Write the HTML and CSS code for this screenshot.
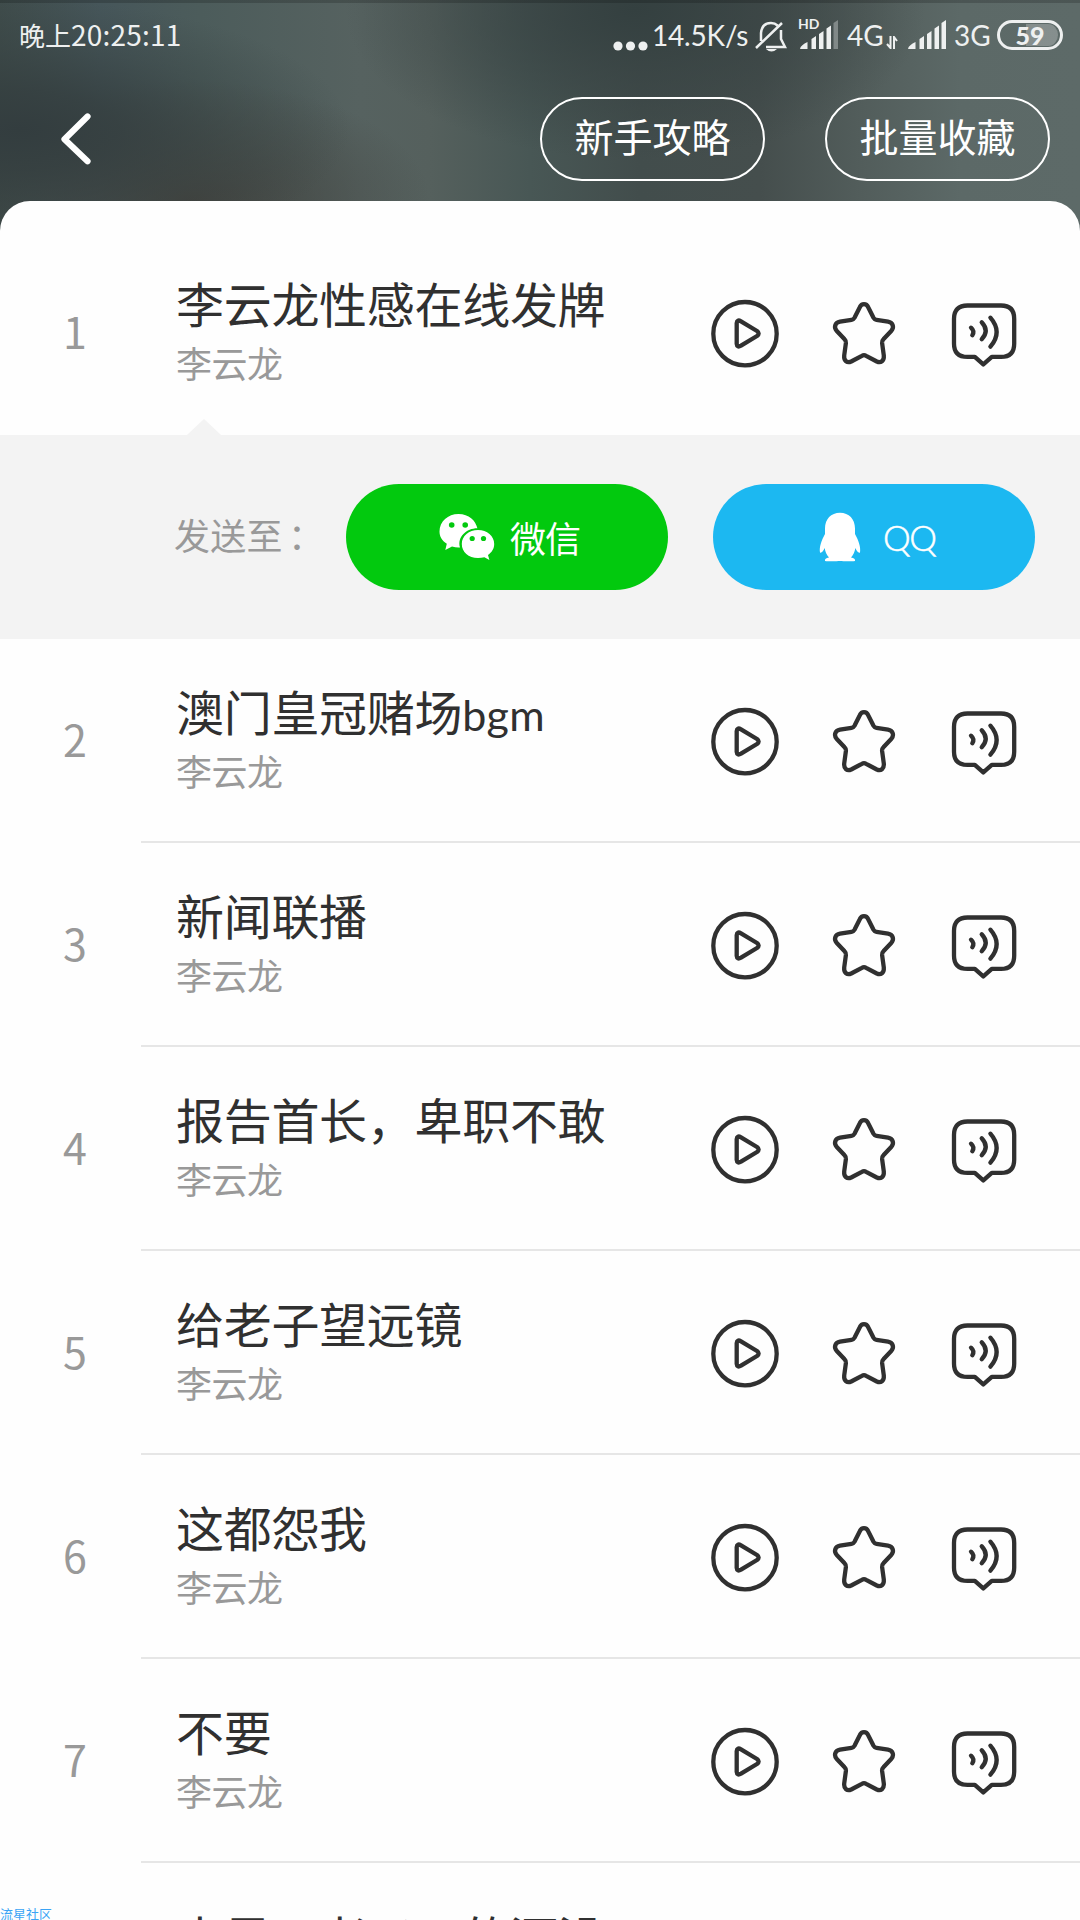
FILE: index.html
```html
<!DOCTYPE html>
<html lang="zh-CN">
<head>
<meta charset="utf-8">
<title>李云龙</title>
<link rel="stylesheet" href="styles.css">
</head>
<body>
<svg class="defs" aria-hidden="true">
  <symbol id="play" viewBox="0 0 72 72">
    <circle cx="36" cy="36.7" r="31.7"/>
    <path d="M27.700 26.200q.3-4.200 4.300-1.900l16 9.700q3.300 2.500 0 5l-16 9.700q-4 2.300-4.300-1.900z"/>
  </symbol>
  <symbol id="star" viewBox="0 0 72 72">
    <path d="M30.800 10.200C32.500 6.200 37.500 6.200 39.200 10.200L44.500 20.700Q45.500 22.500 47.500 22.800L59 24.600C64.300 25.500 65.300 30.500 62.200 34L54.400 42.300Q52.900 43.800 53.100 46L54.800 58.500C55.300 64 51.800 66.300 47.800 64.500L37.100 58.800Q35 57.600 32.900 58.800L22.200 64.500C18.200 66.300 14.700 64 15.200 58.500L16.900 46Q17.100 43.800 15.600 42.300L7.800 34C4.700 30.500 5.700 25.500 11 24.600L22.500 22.800Q24.500 22.500 25.500 20.700Z"/>
  </symbol>
  <symbol id="voice" viewBox="0 0 72 72">
    <path d="M19.500 8.500h33.500q13.200 0 13.200 13.200v25q0 13.200-13.200 13.200h-9.200l-8.500 7.500-8.500-7.500h-7.300q-13.500 0-13.500-13.200v-25q0-13.200 13.500-13.200z"/>
    <path d="M23 30.700q4 3.500 1.300 7.600M33.700 25.300q8 8.500 0 17M42.400 20.700q12.500 14.500 0 29"/>
  </symbol>
  <symbol id="bars" viewBox="0 0 40 30">
    <path d="M0 28.500q1-3.500 7.500-6.500v7h-7zM11.500 19l4.500-3v13h-4.500zM19 14l4.500-3v18H19zM26.500 8.500l4.500-3V29h-4.500z"/>
  </symbol>
</svg>
<header class="top">
  <div class="status">
    <span class="clock">晚上<b>20:25:11</b></span>
    <svg class="dots" viewBox="0 0 36 12"><circle cx="5" cy="6" r="4.600"/><circle cx="17.500" cy="6" r="4.600"/><circle cx="30" cy="6" r="4.600"/></svg>
    <span class="speed">14.5K/s</span>
    <svg class="bell" viewBox="0 0 32 32"><path d="M6 21V13Q7 3 16 3q4 0 6.500 2.500M26 10v9l4 8H11M1 28L27 3" /><path class="solid" d="M11 29h11q-5.500 5-11 0z"/></svg>
    <span class="hd">
      <svg class="signal" viewBox="0 0 40 32"><use href="#bars" x="1" y="1" width="40" height="30"/><path class="dim" d="M34.500 4l4.500-3v29h-4.500z"/></svg>
      <b>HD</b>
    </span>
    <span class="net four">4G</span>
    <svg class="updown" viewBox="0 0 12 13"><path d="M4.500 0v12L1 8M8 13V1l3 4"/></svg>
    <svg class="signal" viewBox="0 0 40 32"><use href="#bars" x="1" y="1" width="40" height="30"/><path d="M34.500 4l4.500-3v29h-4.500z"/></svg>
    <span class="net">3G</span>
    <span class="battery">59</span>
  </div>
  <nav class="bar">
    <svg class="back" viewBox="0 0 30 52"><path d="M26.500 3.500L3.500 26.300l23 22"/></svg>
    <a class="pill">新手攻略</a>
    <a class="pill">批量收藏</a>
  </nav>
</header>
<main class="sheet">
  <section class="row open"><span class="num">1</span><div class="text"><h2>李云龙性感在线发牌</h2><p>李云龙</p></div><div class="icons"><svg><use href="#play"/></svg><svg><use href="#star"/></svg><svg><use href="#voice"/></svg></div></section>
  <section class="share">
    <span class="label">发送至<span class="colon">：</span></span>
    <a class="send wechat">
      <svg viewBox="0 0 56 48"><path d="M19.500 1C30 1 36.500 7.500 38.400 15.300 27.500 15.300 18 24 21 34.500q-4 .3-8-1L6.300 37l1.500-6.200C2.800 27.500.5 23.500.5 18.500.5 8.500 9 1 19.500 1z"/><path d="M39 17c9 0 16.200 6 16.200 14 0 5-2.500 8.300-6.200 11l1.400 5-5-2.800q-3 .8-6.400.8c-9.500 0-16.200-6-16.200-14S30 17 39 17z"/><g fill="#02c90e"><circle cx="12.700" cy="12" r="2.800"/><circle cx="26.200" cy="12" r="2.800"/><circle cx="33.200" cy="25.500" r="2.600"/><circle cx="44.500" cy="25.500" r="2.600"/></g></svg>
      <span>微信</span>
    </a>
    <a class="send qq">
      <svg viewBox="0 0 42 50"><path d="M21 .700C30 .700 36 7 36 16.500V22c3.500 6.500 6 13 5 18.500-1.500.8-3-1-4.700-4.500-.5 4-2 7-4.300 9.500 3 .5 4.500 1.500 4 3.500-4 .5-12 .3-15 0-3 .3-11 .5-15 0-.5-2 1-3 4-3.500-2.300-2.500-3.800-5.500-4.300-9.500-1.700 3.500-3.200 5.300-4.700 4.500-1-5.500 1.500-12 5-18.500v-5.500C6 7 12 .700 21 .700z"/></svg>
      <span>QQ</span>
    </a>
  </section>
  <section class="row"><span class="num">2</span><div class="text"><h2>澳门皇冠赌场<i>bgm</i></h2><p>李云龙</p></div><div class="icons"><svg><use href="#play"/></svg><svg><use href="#star"/></svg><svg><use href="#voice"/></svg></div></section>
  <section class="row"><span class="num">3</span><div class="text"><h2>新闻联播</h2><p>李云龙</p></div><div class="icons"><svg><use href="#play"/></svg><svg><use href="#star"/></svg><svg><use href="#voice"/></svg></div></section>
  <section class="row"><span class="num">4</span><div class="text"><h2>报告首长，卑职不敢</h2><p>李云龙</p></div><div class="icons"><svg><use href="#play"/></svg><svg><use href="#star"/></svg><svg><use href="#voice"/></svg></div></section>
  <section class="row"><span class="num">5</span><div class="text"><h2>给老子望远镜</h2><p>李云龙</p></div><div class="icons"><svg><use href="#play"/></svg><svg><use href="#star"/></svg><svg><use href="#voice"/></svg></div></section>
  <section class="row"><span class="num">6</span><div class="text"><h2>这都怨我</h2><p>李云龙</p></div><div class="icons"><svg><use href="#play"/></svg><svg><use href="#star"/></svg><svg><use href="#voice"/></svg></div></section>
  <section class="row"><span class="num">7</span><div class="text"><h2>不要</h2><p>李云龙</p></div><div class="icons"><svg><use href="#play"/></svg><svg><use href="#star"/></svg><svg><use href="#voice"/></svg></div></section>
  <section class="row peek"><span class="num"></span><div class="text"><h2>中是了老子了的酒没</h2></div></section>
</main>
<div class="mark">流星社区</div>
</body>
</html>
```
FILE: styles.css
```css
* { box-sizing: border-box; margin: 0; padding: 0; }
html, body { width: 1080px; height: 1920px; overflow: hidden; }
body {
  position: relative;
  display: flex;
  flex-direction: column;
  font-family: Lato, "Noto Sans CJK SC", sans-serif;
  color: #303030;
  background:
    linear-gradient(#00000030 0, #00000030 3px, transparent 3px),
    radial-gradient(330px 130px at 20px 130px, #333d3f 0%, #343e3fcc 30%, #36414166 65%, #36414100 100%),
    radial-gradient(240px 120px at 190px 200px, #42433f 0%, #42433faa 35%, #42433f00 100%),
    radial-gradient(290px 150px at 635px 10px, #344040 0%, #374242aa 40%, #37424200 100%),
    linear-gradient(90deg, #3f4c4b 0, #46565a 100px, #4c5c5b 200px, #566260 360px, #55605d 430px, #485755 530px, #424d4c 640px, #454e4d 760px, #525d5b 860px, #5c6967 960px, #5d6a68 1080px);
}
.defs { position: absolute; width: 0; height: 0; }
.top { flex: none; height: 201px; color: #fff; }
.status {
  display: flex;
  align-items: center;
  height: 70px;
  padding: 0 17px 0 19px;
  color: #eef0f0;
  white-space: nowrap;
}
.status svg { flex: none; fill: #eef0f0; }
.clock { flex: none; width: 594px; font-size: 26px; line-height: 36px; }
.clock b { font: 400 28px/36px "Noto Sans CJK SC", sans-serif; letter-spacing: .2px; }
.dots { width: 36px; height: 12px; margin-top: 22px; }
.speed { flex: none; width: 104px; padding-left: 3px; font-size: 28px; letter-spacing: -.2px; }
.status .bell { width: 32px; height: 32px; margin: 2px 12px 0 2px; fill: none; stroke: #eef0f0; stroke-width: 2.5; }
.bell .solid { fill: #eef0f0; stroke: none; }
.signal { display: block; width: 40px; height: 32px; }
.signal .dim { opacity: .35; }
.hd { position: relative; flex: none; }
.hd b { position: absolute; left: -1px; top: -2px; font: 700 14px/14px Lato, sans-serif; }
.net { flex: none; width: 43px; margin-left: 7px; font-size: 28px; }
.net.four { width: 38px; margin-left: 8px; }
.status .updown { width: 12px; height: 13px; margin: 14px 9px 0 1px; fill: none; stroke: #eef0f0; stroke-width: 2; }
.battery {
  flex: none;
  width: 66px;
  height: 30px;
  border: 3px solid #eef0f0;
  border-radius: 15px;
  font-weight: 900;
  font-size: 25px;
  line-height: 23px;
  text-align: center;
  background: linear-gradient(90deg, transparent 24px, #ffffff40 24px) content-box;
  padding: 1px 2px;
}
.bar { display: flex; align-items: center; height: 138px; padding: 0 30px 0 61px; }
.back { width: 30px; height: 52px; margin-right: auto; fill: none; stroke: #fff; stroke-width: 6.200; stroke-linecap: round; stroke-linejoin: round; }
.pill {
  width: 225px;
  height: 84px;
  margin-left: 60px;
  border: 2px solid #fff;
  border-radius: 42px;
  font-size: 39px;
  line-height: 76px;
  text-align: center;
}
.sheet { flex: 1; min-height: 0; overflow: hidden; padding-top: 30px; background: #fefefe; border-radius: 30px 30px 0 0; }
.row { position: relative; display: flex; align-items: center; height: 204px; padding-right: 60px; }
.row:not(.open)::after { content: ""; position: absolute; left: 141px; right: 0; bottom: 0; height: 2px; background: #e6e6e6; }
.row.open::after {
  content: "";
  position: absolute;
  left: 187px;
  bottom: 0;
  border: 17px solid transparent;
  border-top-width: 0;
  border-bottom: 16px solid #f3f3f3;
}
.num { width: 150px; padding-bottom: 7px; font: 43px/50px "Noto Sans CJK SC", sans-serif; color: #999; text-align: center; }
.text { flex: 1; align-self: flex-start; padding: 43px 0 0 26px; white-space: nowrap; }
h2 { font-size: 48px; font-weight: 400; line-height: 62px; letter-spacing: -.3px; }
h2 i { font-style: normal; font-size: 43px; line-height: 1; letter-spacing: .3px; }
p { font-size: 36px; line-height: 50px; margin-top: 3px; color: #999; letter-spacing: -.5px; }
.peek .text { padding-top: 45px; }
.icons { display: flex; gap: 47.500px; }
.icons svg { width: 72px; height: 72px; fill: none; stroke: #303030; stroke-width: 4.300; stroke-linecap: round; stroke-linejoin: round; }
.share { display: flex; align-items: center; height: 204px; padding-left: 174px; background: #f3f3f3; }
.label { width: 172px; padding-bottom: 6px; font-size: 36px; color: #999; letter-spacing: .3px; white-space: nowrap; }
.colon { padding-left: 5px; }
.send { display: flex; align-items: center; width: 322px; height: 106px; border-radius: 53px; color: #fff; }
.send svg { fill: #fff; }
.wechat { background: #02c90e; padding-left: 93px; margin-right: 45px; }
.wechat svg { width: 56px; height: 48px; margin-right: 15px; }
.wechat span { font-size: 36px; font-weight: 400; letter-spacing: -1px; }
.qq { background: #1cb8f1; padding-left: 106px; }
.qq svg { width: 42px; height: 50px; margin-right: 22px; }
.qq span { font-size: 35px; font-weight: 300; letter-spacing: -1.500px; -webkit-text-stroke: .5px #fff; }
.mark { position: absolute; left: 0; top: 1905px; height: 15px; color: #3ba4f5; font-size: 13px; line-height: 19px; }
```
